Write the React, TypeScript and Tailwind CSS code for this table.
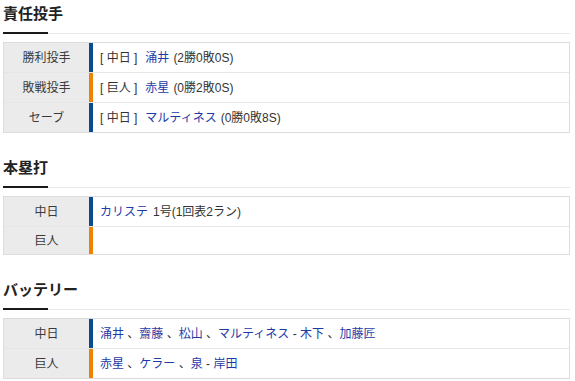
import React from "react";

type Seg = { t: string; link?: boolean };

const BLUE = "bg-[#0c4b90]";
const ORANGE = "bg-[#ef8200]";

function Row({
  label,
  bar,
  children,
  first,
  empty,
}: {
  label: string;
  bar: string;
  children?: React.ReactNode;
  first?: boolean;
  empty?: boolean;
}) {
  const h = first ? "h-[29px]" : empty ? "h-[28px] border-t border-[#e6e6e6]" : "h-[30px] border-t border-[#e6e6e6]";
  return (
    <div className={`flex ${h}`}>
      <div className="w-[85px] shrink-0 bg-[#ebebeb] flex items-center justify-center text-[#3a3a3a] text-[12px]">
        {label}
      </div>
      <div className={`w-[4px] shrink-0 ${bar}`} />
      <div className="flex-1 flex items-center pl-[7px] text-[12px] text-[#333] whitespace-nowrap">
        {children}
      </div>
    </div>
  );
}

function Heading({ title }: { title: string }) {
  return (
    <div>
      <div className="h-[32px] pt-[3px] text-[15px] leading-[22px] font-bold text-[#222]">{title}</div>
      <div className="relative h-[2px]">
        <div className="absolute left-0 right-0 top-[1px] h-px bg-[#e9e9e9]" />
        <div className="absolute left-0 top-0 w-[45px] h-[2px] bg-[#1a1a1a]" />
      </div>
    </div>
  );
}

function Segs({ segs }: { segs: Seg[] }) {
  return (
    <>
      {segs.map((s, i) =>
        s.link ? (
          <span key={i} className="text-[#1d3aa6]">
            {s.t}
          </span>
        ) : (
          <span key={i} className="text-[#333] whitespace-pre">
            {s.t}
          </span>
        )
      )}
    </>
  );
}

function Pitcher({ team, name, stats }: { team: string; name: string; stats: string }) {
  return (
    <>
      <span className="whitespace-pre">[ {team} ]</span>
      <span className="ml-[8px] text-[#1d3aa6]">{name}</span>
      <span className="ml-[4px]">{stats}</span>
    </>
  );
}

export default function App() {
  return (
    <div
      className="w-[575px] h-[381px] bg-white pl-[3px] overflow-hidden"
      style={{ fontFamily: '"Liberation Sans", "Noto Sans CJK JP", sans-serif' }}
    >
      <div className="w-[567px]">
        <section className="mb-[21px]">
          <Heading title="責任投手" />
          <div className="mt-[8px] border border-[#dcdcdc]">
            <Row label="勝利投手" bar={BLUE} first>
              <Pitcher team="中日" name="涌井" stats="(2勝0敗0S)" />
            </Row>
            <Row label="敗戦投手" bar={ORANGE}>
              <Pitcher team="巨人" name="赤星" stats="(0勝2敗0S)" />
            </Row>
            <Row label="セーブ" bar={BLUE}>
              <Pitcher team="中日" name="マルティネス" stats="(0勝0敗8S)" />
            </Row>
          </div>
        </section>

        <section className="mb-[21px]">
          <Heading title="本塁打" />
          <div className="mt-[8px] border border-[#dcdcdc]">
            <Row label="中日" bar={BLUE} first>
              <span className="text-[#1d3aa6]">カリステ</span>
              <span className="ml-[5px]">1号(1回表2ラン)</span>
            </Row>
            <Row label="巨人" bar={ORANGE} empty />
          </div>
        </section>

        <section>
          <Heading title="バッテリー" />
          <div className="mt-[8px] border border-[#dcdcdc]">
            <Row label="中日" bar={BLUE} first>
              <Segs
                segs={[
                  { t: "涌井", link: true },
                  { t: " 、" },
                  { t: "齋藤", link: true },
                  { t: " 、" },
                  { t: "松山", link: true },
                  { t: " 、" },
                  { t: "マルティネス", link: true },
                  { t: " - " },
                  { t: "木下", link: true },
                  { t: " 、" },
                  { t: "加藤匠", link: true },
                ]}
              />
            </Row>
            <Row label="巨人" bar={ORANGE}>
              <Segs
                segs={[
                  { t: "赤星", link: true },
                  { t: " 、" },
                  { t: "ケラー", link: true },
                  { t: " 、" },
                  { t: "泉", link: true },
                  { t: " - " },
                  { t: "岸田", link: true },
                ]}
              />
            </Row>
          </div>
        </section>
      </div>
    </div>
  );
}
